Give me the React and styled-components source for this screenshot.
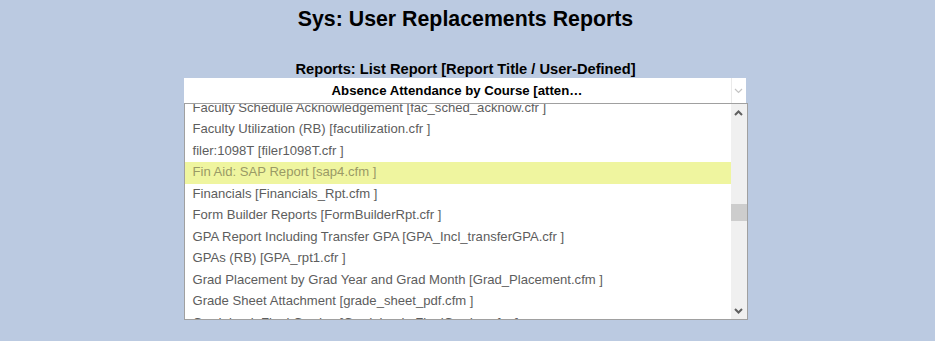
import styled, { createGlobalStyle } from 'styled-components';
import { useRef, useEffect } from 'react';

const reports = [
  'Faculty Load Report [fac_load.cfm ]',
  'Faculty Schedule Acknowledgement [fac_sched_acknow.cfr ]',
  'Faculty Utilization (RB) [facutilization.cfr ]',
  'filer:1098T [filer1098T.cfr ]',
  'Fin Aid: SAP Report [sap4.cfm ]',
  'Financials [Financials_Rpt.cfm ]',
  'Form Builder Reports [FormBuilderRpt.cfr ]',
  'GPA Report Including Transfer GPA [GPA_Incl_transferGPA.cfr ]',
  'GPAs (RB) [GPA_rpt1.cfr ]',
  'Grad Placement by Grad Year and Grad Month [Grad_Placement.cfm ]',
  'Grade Sheet Attachment [grade_sheet_pdf.cfm ]',
  'Gradebook Final Grades [Gradebook_FinalGrades.cfm ]',
  'Graduation Audit [grad_audit.cfm ]',
];

const selected = 'Fin Aid: SAP Report [sap4.cfm ]';

const GlobalStyle = createGlobalStyle`
  html, body {
    margin: 0;
    padding: 0;
    background: #bbcae1;
  }
  body {
    font-family: "Liberation Sans", Arial, sans-serif;
  }
`;

const Page = styled.div`
  width: 931px;
  height: 341px;
  display: flex;
  flex-direction: column;
  align-items: center;
  overflow: hidden;
`;

const Title = styled.h1`
  margin: 7px 0 0;
  font-size: 21.33px;
  line-height: 24px;
  font-weight: bold;
  color: #000;
`;

const Label = styled.div`
  margin-top: 29px;
  font-size: 14.67px;
  line-height: 18px;
  font-weight: bold;
  color: #000;
`;

const Field = styled.div`
  width: 564px;
  display: flex;
  flex-direction: column;
`;

const Select = styled.div`
  height: 25px;
  width: 562px;
  background: #fff;
  display: flex;
  align-items: stretch;
`;

const SelectText = styled.div`
  flex: 1;
  display: flex;
  align-items: center;
  justify-content: center;
  font-size: 13.2px;
  font-weight: bold;
  color: #000;
  border-right: 1px solid #eaeaea;
`;

const SelectArrow = styled.div`
  width: 14px;
  display: flex;
  align-items: center;
  justify-content: center;
`;

const ListBox = styled.div`
  height: 215px;
  border: 1px solid #a0a0a0;
  background: #fff;
  display: flex;
`;

const Viewport = styled.div`
  flex: 1;
  overflow: hidden;
`;

const Item = styled.div`
  height: 21.5px;
  line-height: 20.5px;
  padding-bottom: 1px;
  box-sizing: border-box;
  padding-left: 8px;
  font-size: 13.1px;
  white-space: nowrap;
  color: ${p => (p.$active ? '#9a9a66' : '#5d5d5d')};
  background: ${p => (p.$active ? '#eff59f' : 'transparent')};
`;

const Scrollbar = styled.div`
  width: 16px;
  background: #f0f0f0;
  display: flex;
  flex-direction: column;
`;

const ScrollButton = styled.div`
  height: 17px;
  display: flex;
  align-items: center;
  justify-content: center;
`;

const Track = styled.div`
  flex: 1;
  padding-top: 83px;
`;

const Thumb = styled.div`
  height: 17px;
  background: #cdcdcd;
`;

const Chevron = ({ dir = 'down', color = '#606060', w = 2 }) => (
  <svg width="9" height="6" viewBox="0 0 9 6">
    <path
      d={dir === 'down' ? 'M1 1 L4.5 4.5 L8 1' : 'M1 5 L4.5 1.5 L8 5'}
      fill="none"
      stroke={color}
      strokeWidth={w}
    />
  </svg>
);

export default function App() {
  const viewRef = useRef(null);

  useEffect(() => {
    if (viewRef.current) viewRef.current.scrollTop = 28;
  }, []);

  return (
    <Page>
      <GlobalStyle />
      <Title>Sys: User Replacements Reports</Title>
      <Label>Reports: List Report [Report Title / User-Defined]</Label>
      <Field>
        <Select>
          <SelectText>Absence Attendance by Course [atten…</SelectText>
          <SelectArrow>
            <Chevron color="#c4c4c4" w={1.2} />
          </SelectArrow>
        </Select>
        <ListBox>
          <Viewport ref={viewRef}>
            {reports.map(r => (
              <Item key={r} $active={r === selected}>{r}</Item>
            ))}
          </Viewport>
          <Scrollbar>
            <ScrollButton>
              <Chevron dir="up" />
            </ScrollButton>
            <Track>
              <Thumb />
            </Track>
            <ScrollButton>
              <Chevron />
            </ScrollButton>
          </Scrollbar>
        </ListBox>
      </Field>
    </Page>
  );
}
